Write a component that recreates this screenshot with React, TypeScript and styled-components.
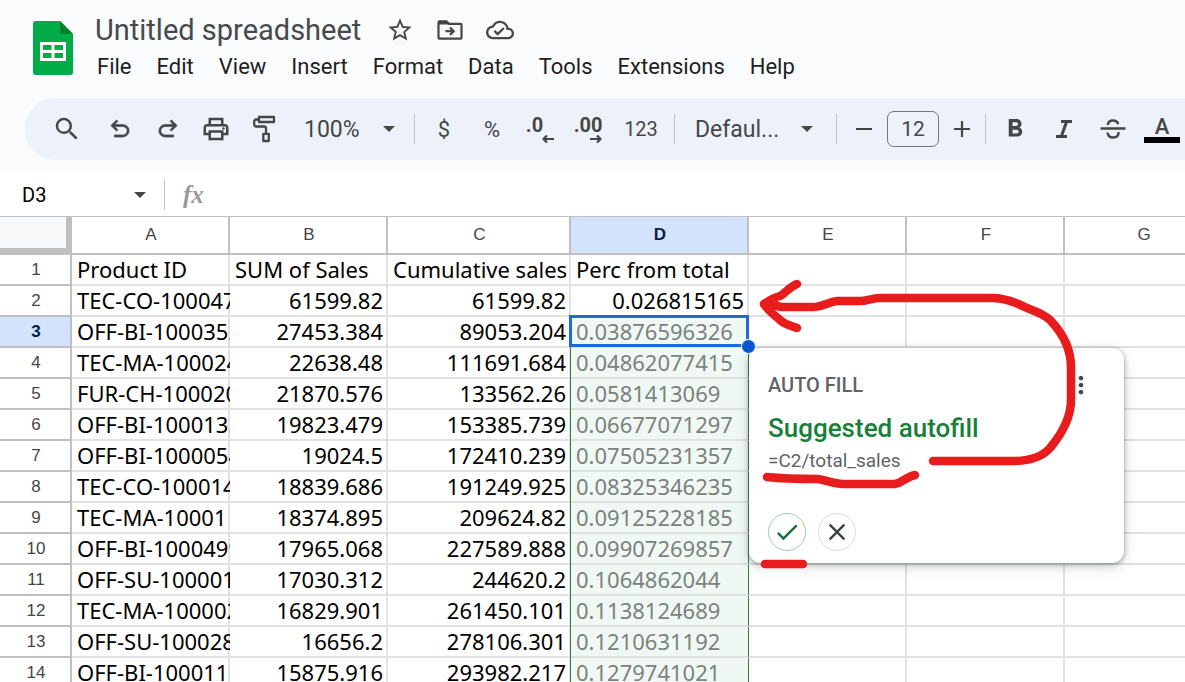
import React from "react";
import styled, { createGlobalStyle, css } from "styled-components";
import {
  MdCheck,
  MdClose,
  MdFormatBold,
  MdMoreVert,
  MdOutlineCloudDone,
  MdOutlinePrint,
  MdSearch,
  MdStarBorder,
} from "react-icons/md";

const GlobalStyle = createGlobalStyle`
  *, *::before, *::after { box-sizing: border-box; }
  body { margin: 0; background: #fff; font-family: Roboto, "Liberation Sans", sans-serif; }
  button, input { font: inherit; color: inherit; margin: 0; }
`;

const Page = styled.div`
  display: flex;
  flex-direction: column;
  height: 100vh;
  overflow: hidden;
`;

const Top = styled.header`
  flex: none;
  background: #f9fbfd;
  padding: 12px 0 13px;
`;

const TitleArea = styled.div`
  display: flex;
  padding-left: 33px;
  height: 86px;
`;

const LogoLink = styled.a`
  display: block;
  width: 40px;
  padding-top: 9px;
  svg { display: block; }
`;

const TitleColumn = styled.div`
  padding-left: 22px;
`;

const TitleRow = styled.div`
  display: flex;
  align-items: center;
  height: 36px;
`;

const Title = styled.h1`
  margin: 0 19px 0 0;
  font-size: 29px;
  line-height: 34px;
  font-weight: 400;
  color: #474a4d;
  white-space: nowrap;
`;

const PlainButton = styled.button`
  display: flex;
  align-items: center;
  justify-content: center;
  padding: 0;
  border: 0;
  background: none;
  color: #444746;
  cursor: pointer;
`;

const TitleAction = styled(PlainButton)`
  width: 50px;
  height: 36px;
  padding-right: 10px;
`;

const MenuBar = styled.nav`
  display: flex;
  gap: 25px;
  padding: 5px 0 0 2px;
`;

const MenuButton = styled(PlainButton)`
  font-size: 22px;
  line-height: 28px;
  color: #1f1f1f;
`;

const Toolbar = styled.div`
  display: flex;
  align-items: center;
  height: 62px;
  margin-left: 25px;
  padding-left: 18px;
  border-radius: 31px 0 0 31px;
  background: #edf2fa;
  color: #444746;
  overflow: hidden;
`;

const Group = styled.div<{ $gap?: number }>`
  display: flex;
  flex: none;
  align-items: center;
  gap: ${(p) => p.$gap ?? 0}px;
`;

const ToolButton = styled(PlainButton)<{ $width?: number; $size?: number }>`
  flex: none;
  width: ${(p) => p.$width ?? 48}px;
  height: 44px;
  font-size: ${(p) => p.$size ?? 20}px;
`;

const DropButton = styled(PlainButton)<{ $width: number }>`
  flex: none;
  width: ${(p) => p.$width}px;
  height: 44px;
  padding: 0 14px 0 16px;
  justify-content: space-between;
  font-size: 23px;
`;

const Caret = styled.span`
  border: 6px solid transparent;
  border-top-color: #444746;
  border-bottom-width: 0;
`;

const Divider = styled.span<{ $space: number }>`
  flex: none;
  width: 1px;
  height: 30px;
  margin: 0 ${(p) => p.$space}px;
  background: #c0c4c9;
`;

const SizeInput = styled.input`
  width: 52px;
  height: 36px;
  padding: 0;
  border: 1px solid #747775;
  border-radius: 7px;
  background: transparent;
  text-align: center;
  font-size: 21px;
`;

const Decimal = styled.span<{ $trail: number }>`
  display: flex;
  flex-direction: column;
  align-items: flex-end;
  font-size: 20px;
  line-height: 20px;
  font-weight: 700;
  span { padding-right: ${(p) => p.$trail}px; }
  svg { display: block; }
`;

const TextColor = styled.span`
  display: flex;
  flex-direction: column;
  align-items: center;
  width: 36px;
  font-size: 22px;
  line-height: 21px;
  font-weight: 500;
  border-bottom: 6px solid #000;
`;

const FormulaBar = styled.div`
  display: flex;
  flex: none;
  align-items: center;
  height: 43px;
  padding-left: 22px;
`;

const NameBox = styled.input`
  width: 112px;
  padding: 0;
  border: 0;
  outline: 0;
  font-size: 20px;
  background: transparent;
`;

const Fx = styled.span`
  font: italic 700 25px/30px "Liberation Serif", serif;
  color: #9a9a9a;
`;

const Sheet = styled.main`
  position: relative;
  flex: 1;
  min-height: 0;
  overflow: hidden;
  border-top: 1px solid #c0c0c0;
`;

const Grid = styled.table`
  table-layout: fixed;
  width: 1223px;
  border-collapse: separate;
  border-spacing: 0;
`;

const headText = css`
  font: 400 17px/20px "Liberation Sans", sans-serif;
  color: #444746;
  padding: 0 0 0 2px;
  text-align: center;
  border: 0 solid #c0c0c0;
`;

const activeHead = css`
  background: #d3e3fd;
  color: #041e49;
  font-weight: 700;
`;

const Corner = styled.td`
  height: 38px;
  padding: 0;
  background: #f8f9fa;
  border: solid #c0c0c0;
  border-width: 0 6px 7px 0;
`;

const ColumnHead = styled.th<{ $active: boolean }>`
  ${headText}
  height: 38px;
  border-right-width: 2px;
  border-bottom-width: 2px;
  ${(p) => p.$active && activeHead}
`;

const RowHead = styled.th<{ $active: boolean }>`
  ${headText}
  height: 31px;
  border-right-width: 2px;
  border-bottom-width: 2px;
  ${(p) => p.$active && activeHead}
`;

const Cell = styled.td<{ $right?: boolean; $suggested?: boolean }>`
  position: relative;
  height: 31px;
  padding: 0 3px 0 5px;
  border: solid #e1e1e1;
  border-width: 0 2px 2px 0;
  font-family: "Noto Sans", sans-serif;
  font-size: 22px;
  line-height: 29px;
  white-space: nowrap;
  color: #000;
  text-align: ${(p) => (p.$right ? "right" : "left")};
  ${(p) =>
    p.$suggested &&
    css`
      background: #f0f8f3;
      color: #7a827d;
      border-right: 1px solid #2f7d4a;
      box-shadow: -1px 0 0 #2f7d4a;
    `}
`;

const Clip = styled.div`
  overflow: hidden;
  height: 29px;
  margin-right: -5px;
  padding-right: 5px;
`;

const Selection = styled.span`
  position: absolute;
  z-index: 1;
  inset: -2px -1px -1px -2px;
  border: 3px solid #1f6ad8;

  &::after {
    content: "";
    position: absolute;
    right: -10px;
    bottom: -10px;
    width: 15px;
    height: 15px;
    border: 1px solid #fff;
    border-radius: 50%;
    background: #0b57d0;
  }
`;

const Card = styled.section`
  position: absolute;
  left: 749px;
  top: 131px;
  width: 375px;
  height: 215px;
  padding: 25px 19px 12px;
  display: flex;
  flex-direction: column;
  border-radius: 12px;
  background: #fff;
  box-shadow: 0 1px 4px rgba(60, 64, 67, 0.5), 0 4px 14px rgba(60, 64, 67, 0.2);
`;

const CardTop = styled.div`
  display: flex;
  justify-content: space-between;
  align-items: center;
  height: 24px;
  padding-right: 10px;
`;

const Overline = styled.span`
  font-size: 20px;
  font-weight: 500;
  color: #5f6368;
`;

const CardTitle = styled.h2`
  margin: 13px 0 0;
  font-size: 26px;
  line-height: 36px;
  font-weight: 500;
  color: #188038;
`;

const Formula = styled.p`
  margin: 3px 0 0;
  font-size: 19px;
  line-height: 24px;
  color: #5f6368;
`;

const CardActions = styled.div`
  display: flex;
  gap: 12px;
  margin-top: auto;
`;

const RoundButton = styled(PlainButton)<{ $accept?: boolean }>`
  width: 38px;
  height: 38px;
  border: 1px solid ${(p) => (p.$accept ? "#9ccfa9" : "#dadce0")};
  border-radius: 50%;
  color: ${(p) => (p.$accept ? "#137333" : "#3c4043")};
`;

const Marker = styled.svg`
  position: absolute;
  left: 750px;
  top: 58px;
  pointer-events: none;
`;

const Logo = () => (
  <svg width="40" height="54" viewBox="0 0 40 54" aria-hidden="true">
    <path d="M3 0H27L40 13V51a3 3 0 0 1-3 3H3a3 3 0 0 1-3-3V3a3 3 0 0 1 3-3Z" fill="#00ac47" />
    <path d="M27 0L40 13H27Z" fill="#00832d" />
    <path
      d="M7 21H33V40H7ZM10 24V29H18.500V24ZM21.500 24V29H30V24ZM10 32V37H18.500V32ZM21.500 32V37H30V32Z"
      fill="#fff"
      fillRule="evenodd"
    />
  </svg>
);

const FolderMove = () => (
  <svg width="26" height="20" viewBox="0 0 26 20" fill="none" stroke="currentColor" strokeWidth="2.200" aria-hidden="true">
    <path d="M1.500 3V17.500a1.200 1.200 0 0 0 1.200 1.200H23.300a1.200 1.200 0 0 0 1.200-1.200V5a1.200 1.200 0 0 0-1.200-1.200H12L9.500 1.300H2.700A1.200 1.200 0 0 0 1.500 2.500Z" />
    <path d="M2 1.500H9.500L12 4.500H2Z" fill="currentColor" stroke="none" />
    <path d="M8.500 11.200H16.500M13 7.500L16.700 11.200L13 14.900" />
  </svg>
);

const Symbol = ({ d }: { d: string }) => (
  <svg width="28" height="28" viewBox="0 -960 960 960" fill="currentColor" stroke="currentColor" strokeWidth="10" aria-hidden="true">
    <path d={d} />
  </svg>
);

const UNDO =
  "M280-200v-80h284q63 0 109.500-40T720-420q0-60-46.500-100T564-560H312l104 104-56 56-200-200 200-200 56 56-104 104h252q97 0 169.500 63T800-420q0 94-72.500 157T564-200H280Z";
const REDO =
  "M396-200q-97 0-169.500-63T160-420q0-94 66.500-157T396-640h252L544-744l56-56 200 200-200 200-56-56 104-104H396q-63 0-109.500 40T240-420q0 60 46.500 100T396-280h284v80H396Z";

const PaintRoller = () => (
  <svg width="24" height="28" viewBox="0 0 24 28" fill="none" stroke="currentColor" strokeWidth="2.300" strokeLinejoin="round" aria-hidden="true">
    <path d="M7 2H22V7H7ZM7 4.500H4.200A2 2 0 0 0 2.200 6.500V9.500A2 2 0 0 0 4.200 11.500H12.500A1.500 1.500 0 0 1 14 13V18.500M11.300 18.800H16.800V26H11.300Z" />
  </svg>
);

const Italic = () => (
  <svg width="18" height="20" viewBox="0 0 18 20" fill="none" stroke="currentColor" strokeWidth="3" aria-hidden="true">
    <path d="M6 2.500H17M1 17.500H12M11.700 2.500L6.300 17.500" />
  </svg>
);

const Strike = () => (
  <svg width="26" height="22" viewBox="0 0 26 22" fill="none" stroke="currentColor" strokeWidth="2.400" aria-hidden="true">
    <path d="M0.500 10.500H25.500M7.800 7C8 3.800 10 2.500 13 2.500C15.800 2.500 17.600 3.800 18.200 6.200M7.400 14.500C8 18 10 19.500 13 19.500C16.500 19.500 18.500 17.800 18.500 14.800V14" />
  </svg>
);

const Arrow = ({ flip }: { flip?: boolean }) => (
  <svg width="12" height="8" viewBox="0 0 12 8" fill="none" stroke="currentColor" strokeWidth="2.200" aria-hidden="true">
    <path d={flip ? "M0 4H10.500M7 0.500L10.500 4L7 7.500" : "M12 4H1.500M5 0.500L1.500 4L5 7.500"} />
  </svg>
);

const Line = ({ plus }: { plus?: boolean }) => (
  <svg width="16" height="16" viewBox="0 0 16 16" stroke="currentColor" strokeWidth="2.200" aria-hidden="true">
    <path d={plus ? "M0 8H16M8 0V16" : "M0 8H16"} />
  </svg>
);

const menus = ["File", "Edit", "View", "Insert", "Format", "Data", "Tools", "Extensions", "Help"];
const columns = ["A", "B", "C", "D", "E", "F", "G"];
const widths = [158, 158, 183, 178, 158, 158, 158];

const rows: string[][] = [
  ["Product ID", "SUM of Sales", "Cumulative sales", "Perc from total"],
  ["TEC-CO-100047", "61599.82", "61599.82", "0.026815165"],
  ["OFF-BI-1000352", "27453.384", "89053.204", "0.03876596326"],
  ["TEC-MA-100024", "22638.48", "111691.684", "0.04862077415"],
  ["FUR-CH-100020", "21870.576", "133562.26", "0.0581413069"],
  ["OFF-BI-1000135", "19823.479", "153385.739", "0.06677071297"],
  ["OFF-BI-1000054", "19024.5", "172410.239", "0.07505231357"],
  ["TEC-CO-100014", "18839.686", "191249.925", "0.08325346235"],
  ["TEC-MA-10001", "18374.895", "209624.82", "0.09125228185"],
  ["OFF-BI-1000499", "17965.068", "227589.888", "0.09907269857"],
  ["OFF-SU-100001", "17030.312", "244620.2", "0.1064862044"],
  ["TEC-MA-100002", "16829.901", "261450.101", "0.1138124689"],
  ["OFF-SU-100028", "16656.2", "278106.301", "0.1210631192"],
  ["OFF-BI-1000111", "15875.916", "293982.217", "0.1279741021"],
];

export default function App() {
  return (
    <Page>
      <GlobalStyle />
      <Top>
        <TitleArea>
          <LogoLink href="#" aria-label="Sheets home">
            <Logo />
          </LogoLink>
          <TitleColumn>
            <TitleRow>
              <Title>Untitled spreadsheet</Title>
              <TitleAction aria-label="Star"><MdStarBorder size={28} /></TitleAction>
              <TitleAction aria-label="Move"><FolderMove /></TitleAction>
              <TitleAction aria-label="Saved to Drive"><MdOutlineCloudDone size={28} /></TitleAction>
            </TitleRow>
            <MenuBar>
              {menus.map((m) => (
                <MenuButton key={m}>{m}</MenuButton>
              ))}
            </MenuBar>
          </TitleColumn>
        </TitleArea>
        <Toolbar role="toolbar">
          <Group $gap={5}>
            <ToolButton aria-label="Search"><MdSearch size={30} /></ToolButton>
            <Group>
              <ToolButton aria-label="Undo"><Symbol d={UNDO} /></ToolButton>
              <ToolButton aria-label="Redo"><Symbol d={REDO} /></ToolButton>
              <ToolButton aria-label="Print"><MdOutlinePrint size={30} /></ToolButton>
              <ToolButton aria-label="Paint format"><PaintRoller /></ToolButton>
            </Group>
          </Group>
          <DropButton $width={121}>100%<Caret /></DropButton>
          <Divider $space={5} />
          <Group>
            <ToolButton $size={22} aria-label="Currency">$</ToolButton>
            <ToolButton $size={22} aria-label="Percent">%</ToolButton>
            <ToolButton aria-label="Decrease decimals">
              <Decimal $trail={11}><span>.0</span><Arrow /></Decimal>
            </ToolButton>
            <ToolButton aria-label="Increase decimals">
              <Decimal $trail={0}><span>.00</span><Arrow flip /></Decimal>
            </ToolButton>
            <ToolButton $width={58}>123</ToolButton>
          </Group>
          <Divider $space={4} />
          <DropButton $width={148}>Defaul...<Caret /></DropButton>
          <Divider $space={9} />
          <Group $gap={5}>
            <ToolButton $width={36} aria-label="Decrease font size"><Line /></ToolButton>
            <SizeInput aria-label="Font size" defaultValue="12" />
            <ToolButton $width={36} aria-label="Increase font size"><Line plus /></ToolButton>
          </Group>
          <Divider $space={5} />
          <Group $gap={1}>
            <ToolButton aria-label="Bold"><MdFormatBold size={30} /></ToolButton>
            <ToolButton aria-label="Italic"><Italic /></ToolButton>
            <ToolButton aria-label="Strikethrough"><Strike /></ToolButton>
            <ToolButton aria-label="Text color"><TextColor>A</TextColor></ToolButton>
          </Group>
        </Toolbar>
      </Top>
      <FormulaBar>
        <NameBox aria-label="Name box" defaultValue="D3" />
        <Caret />
        <Divider $space={18} />
        <Fx>fx</Fx>
      </FormulaBar>
      <Sheet>
        <Grid>
          <colgroup>
            <col style={{ width: 72 }} />
            {widths.map((w, i) => (
              <col key={i} style={{ width: w }} />
            ))}
          </colgroup>
          <thead>
            <tr>
              <Corner />
              {columns.map((c) => (
                <ColumnHead key={c} scope="col" $active={c === "D"}>{c}</ColumnHead>
              ))}
            </tr>
          </thead>
          <tbody>
            {rows.map((row, r) => (
              <tr key={r}>
                <RowHead scope="row" $active={r === 2}>{r + 1}</RowHead>
                {columns.map((c, i) => {
                  const suggested = i === 3 && r > 1;
                  return (
                    <Cell key={c} $right={r > 0 && i > 0 && !suggested} $suggested={suggested}>
                      <Clip>{row[i]}</Clip>
                      {r === 2 && i === 3 && <Selection />}
                    </Cell>
                  );
                })}
              </tr>
            ))}
          </tbody>
        </Grid>
        <Card>
          <CardTop>
            <Overline>AUTO FILL</Overline>
            <PlainButton aria-label="More options"><MdMoreVert size={28} /></PlainButton>
          </CardTop>
          <CardTitle>Suggested autofill</CardTitle>
          <Formula>=C2/total_sales</Formula>
          <CardActions>
            <RoundButton $accept aria-label="Accept"><MdCheck size={28} /></RoundButton>
            <RoundButton aria-label="Reject"><MdClose size={28} /></RoundButton>
          </CardActions>
        </Card>
        <Marker width="340" height="300" viewBox="750 275 340 300" fill="none" stroke="#e81c1c" strokeWidth="8.500" strokeLinecap="round" strokeLinejoin="round" aria-hidden="true">
          <path d="M933 461H1013C1030 461 1043 456 1050 448C1060 436 1071 418 1071 400V367C1071 350 1064 335 1051 321C1047 316 1035 311 1027 308C1015 302 1005 298 993 298H880C872 298 867 301 860 301H837C829 302 821 307 813 307H782L764 304C771 299 776 297 780 296C786 293 789 287 797 284" />
          <path d="M764 304C768 310 774 315 779 319C783 324 789 325 797 328M768 304L774 302V306Z" />
          <path d="M767 477C785 479 800 479 817 479C826 480 834 484 843 484H895C902 483 906 477 915 475M765 564H803" />
        </Marker>
      </Sheet>
    </Page>
  );
}
